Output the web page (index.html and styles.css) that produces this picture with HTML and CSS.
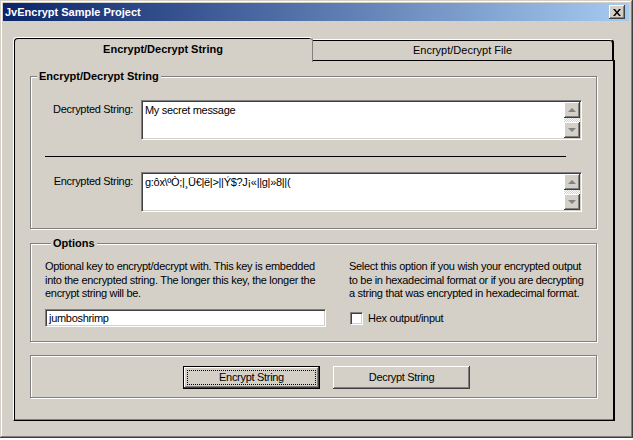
FILE: index.html
```html
<!DOCTYPE html>
<html lang="en">
<head>
    <meta charset="UTF-8">
    <title>JvEncrypt Sample Project</title>
    <link rel="stylesheet" href="styles.css">
</head>
<body>
    <div class="window">
        <div class="titlebar">
            <span class="title">JvEncrypt Sample Project</span>
            <span class="close-btn">
                <svg width="8" height="7" viewBox="0 0 8 7"><path d="M0 0h2l2 2.5 2-2.5h2l-3 3.5 3 3.5h-2l-2-2.5-2 2.5h-2l3-3.5z" fill="#000"/></svg>
            </span>
        </div>

        <div class="client">
            <div class="tabs">
                <div class="tab active">Encrypt/Decrypt String</div>
                <div class="tab">Encrypt/Decrypt File</div>
            </div>

            <div class="tab-panel">
                <fieldset class="group group-strings">
                    <legend>Encrypt/Decrypt String</legend>
                    <div class="field-row">
                        <label>Decrypted String:</label>
                        <div class="memo">
                            <div class="memo-text">My secret message</div>
                            <div class="scrollbar">
                                <span class="sb-btn"><span class="arrow-up"></span></span>
                                <span class="sb-track"></span>
                                <span class="sb-btn"><span class="arrow-down"></span></span>
                            </div>
                        </div>
                    </div>
                    <div class="separator"></div>
                    <div class="field-row">
                        <label>Encrypted String:</label>
                        <div class="memo">
                            <div class="memo-text">g:ôx\ºÒ;|¸Ü€|ë|&gt;||Ý$?J¡«||g|»8||(</div>
                            <div class="scrollbar">
                                <span class="sb-btn"><span class="arrow-up"></span></span>
                                <span class="sb-track"></span>
                                <span class="sb-btn"><span class="arrow-down"></span></span>
                            </div>
                        </div>
                    </div>
                </fieldset>

                <fieldset class="group group-options">
                    <legend>Options</legend>
                    <div class="option-col col-key">
                        <p>Optional key to encrypt/decrypt with. This key is embedded<br>into the encrypted string. The longer this key, the longer the<br>encrypt string will be.</p>
                        <div class="edit">jumboshrimp</div>
                    </div>
                    <div class="option-col col-hex">
                        <p>Select this option if you wish your encrypted output<br>to be in hexadecimal format or if you are decrypting<br>a string that was encrypted in hexadecimal format.</p>
                        <div class="check-row">
                            <span class="checkbox"></span>
                            <span>Hex output/input</span>
                        </div>
                    </div>
                </fieldset>

                <fieldset class="group group-buttons">
                    <button class="btn btn-default"><span class="focus">Encrypt String</span></button>
                    <button class="btn">Decrypt String</button>
                </fieldset>
            </div>
        </div>
    </div>
</body>
</html>
```

FILE: styles.css
```css
* {
    box-sizing: border-box;
}
body {
    margin: 0;
    background-color: #fff;
    font-family: "Liberation Sans", Arial, sans-serif;
    font-size: 11px;
    color: #000;
}
.window {
    width: 633px;
    height: 438px;
    padding: 3px 4px 4px 3px;
    background-color: #d4d0c8;
    box-shadow: inset -1px -1px 0 #404040, inset 1px 1px 0 #d4d0c8, inset -2px -2px 0 #808080, inset 2px 2px 0 #fff;
}
.titlebar {
    height: 18px;
    padding: 0 4px 0 2px;
    display: flex;
    align-items: center;
    justify-content: space-between;
    background: linear-gradient(to right, #0a246a, #a6caf0);
    color: #fff;
    font-weight: bold;
}
.close-btn {
    width: 16px;
    height: 14px;
    display: flex;
    align-items: center;
    justify-content: center;
    background-color: #d4d0c8;
    box-shadow: inset -1px -1px 0 #404040, inset 1px 1px 0 #fff, inset -2px -2px 0 #808080;
}

.client {
    padding: 16px 0 0 10px;
}
.tabs {
    display: flex;
    align-items: flex-end;
    height: 23px;
    position: relative;
    z-index: 1;
}
.tab {
    width: 301px;
    height: 21px;
    display: flex;
    align-items: center;
    justify-content: center;
    background-color: #d4d0c8;
    border-top: 1px solid #fff;
    border-right: 2px solid #000;
    border-radius: 0 4px 0 0;
    box-shadow: inset 0 1px 0 #000;
}
.tab.active {
    width: 300px;
    height: 25px;
    margin-bottom: -2px;
    font-weight: bold;
    border-left: 1px solid #fff;
    border-right: 1px solid #808080;
    border-radius: 4px 4px 0 0;
    box-shadow: inset 1px 1px 0 #000;
    padding-bottom: 2px;
}
.tab-panel {
    width: 602px;
    height: 361px;
    padding: 9px 0 0 16px;
    border-top: 1px solid #000;
    border-left: 1px solid #fff;
    border-right: 2px solid #000;
    border-bottom: 1px solid #000;
    box-shadow: inset 1px 0 0 #000, inset 0 -1px 0 #808080;
}

.group {
    width: 567px;
    margin: 0;
    padding: 0;
    min-width: 0;
    border: 1px solid #808080;
    box-shadow: 1px 1px 0 #fff, inset 1px 1px 0 #fff;
}
.group legend {
    margin-left: 6px;
    padding: 0 2px;
    line-height: 13px;
    font-weight: bold;
    background-color: #d4d0c8;
}

.group-strings {
    padding: 17px 0 16px 0;
}
.field-row {
    display: flex;
    align-items: flex-start;
}
.field-row label {
    width: 102px;
    margin-right: 8px;
    padding-top: 3px;
    text-align: right;
    letter-spacing: -0.3px;
}
.memo {
    width: 441px;
    height: 40px;
    display: flex;
    background-color: #fff;
    border-top: 1px solid #808080;
    border-left: 1px solid #808080;
    border-right: 1px solid #fff;
    border-bottom: 1px solid #fff;
    box-shadow: inset 1px 1px 0 #404040, inset -1px -1px 0 #d4d0c8;
}
.memo-text {
    flex: 1;
    padding: 3px 0 0 3px;
    letter-spacing: -0.3px;
}
.scrollbar {
    width: 17px;
    padding: 1px 1px 1px 0;
    display: flex;
    flex-direction: column;
}
.sb-btn {
    height: 16px;
    display: flex;
    align-items: center;
    justify-content: center;
    background-color: #d4d0c8;
    box-shadow: inset -1px -1px 0 #404040, inset 1px 1px 0 #fff, inset -2px -2px 0 #808080;
}
.sb-track {
    flex: 1;
    background-color: #e8e6e2;
    background-image: repeating-conic-gradient(#d4d0c8 0 25%, #fff 0 50%);
    background-size: 2px 2px;
}
.arrow-up, .arrow-down {
    width: 0;
    height: 0;
    border-left: 4px solid transparent;
    border-right: 4px solid transparent;
}
.arrow-up {
    border-bottom: 4px solid #808080;
}
.arrow-down {
    border-top: 4px solid #808080;
}
.separator {
    width: 521px;
    height: 1px;
    margin: 16px 0 15px 14px;
    background-color: #000;
}

.group-options {
    margin-top: 8px;
    padding: 10px 0 14px 14px;
    display: flex;
    gap: 23px;
}
.option-col p {
    margin: 0;
    line-height: 13.5px;
    letter-spacing: -0.3px;
}
.col-key {
    width: 281px;
}
.col-hex {
    width: 240px;
}
.edit {
    height: 18px;
    margin-top: 8px;
    padding: 2px 0 0 3px;
    line-height: 13px;
    background-color: #fff;
    border-top: 1px solid #808080;
    border-left: 1px solid #808080;
    border-right: 1px solid #fff;
    border-bottom: 1px solid #fff;
    box-shadow: inset 1px 1px 0 #404040, inset -1px -1px 0 #d4d0c8;
    letter-spacing: -0.3px;
}
.check-row {
    margin-top: 11px;
    display: flex;
    align-items: center;
    gap: 5px;
    letter-spacing: -0.3px;
}
.checkbox {
    width: 13px;
    height: 13px;
    margin-left: 1px;
    background-color: #fff;
    border-top: 1px solid #808080;
    border-left: 1px solid #808080;
    border-right: 1px solid #fff;
    border-bottom: 1px solid #fff;
    box-shadow: inset 1px 1px 0 #404040, inset -1px -1px 0 #d4d0c8;
}

.group-buttons {
    margin-top: 13px;
    height: 43px;
    padding: 10px 0 0 152px;
    display: flex;
    align-items: flex-start;
    gap: 13px;
}
.btn {
    width: 137px;
    height: 23px;
    padding: 0;
    display: flex;
    align-items: center;
    justify-content: center;
    font-family: inherit;
    font-size: 11px;
    letter-spacing: -0.3px;
    color: #000;
    background-color: #d4d0c8;
    border: none;
    box-shadow: inset -1px -1px 0 #404040, inset 1px 1px 0 #fff, inset -2px -2px 0 #808080;
}
.btn-default {
    border: 1px solid #000;
    padding: 3px;
}
.focus {
    width: 100%;
    height: 100%;
    display: flex;
    align-items: center;
    justify-content: center;
    border: 1px dotted #000;
}
```
